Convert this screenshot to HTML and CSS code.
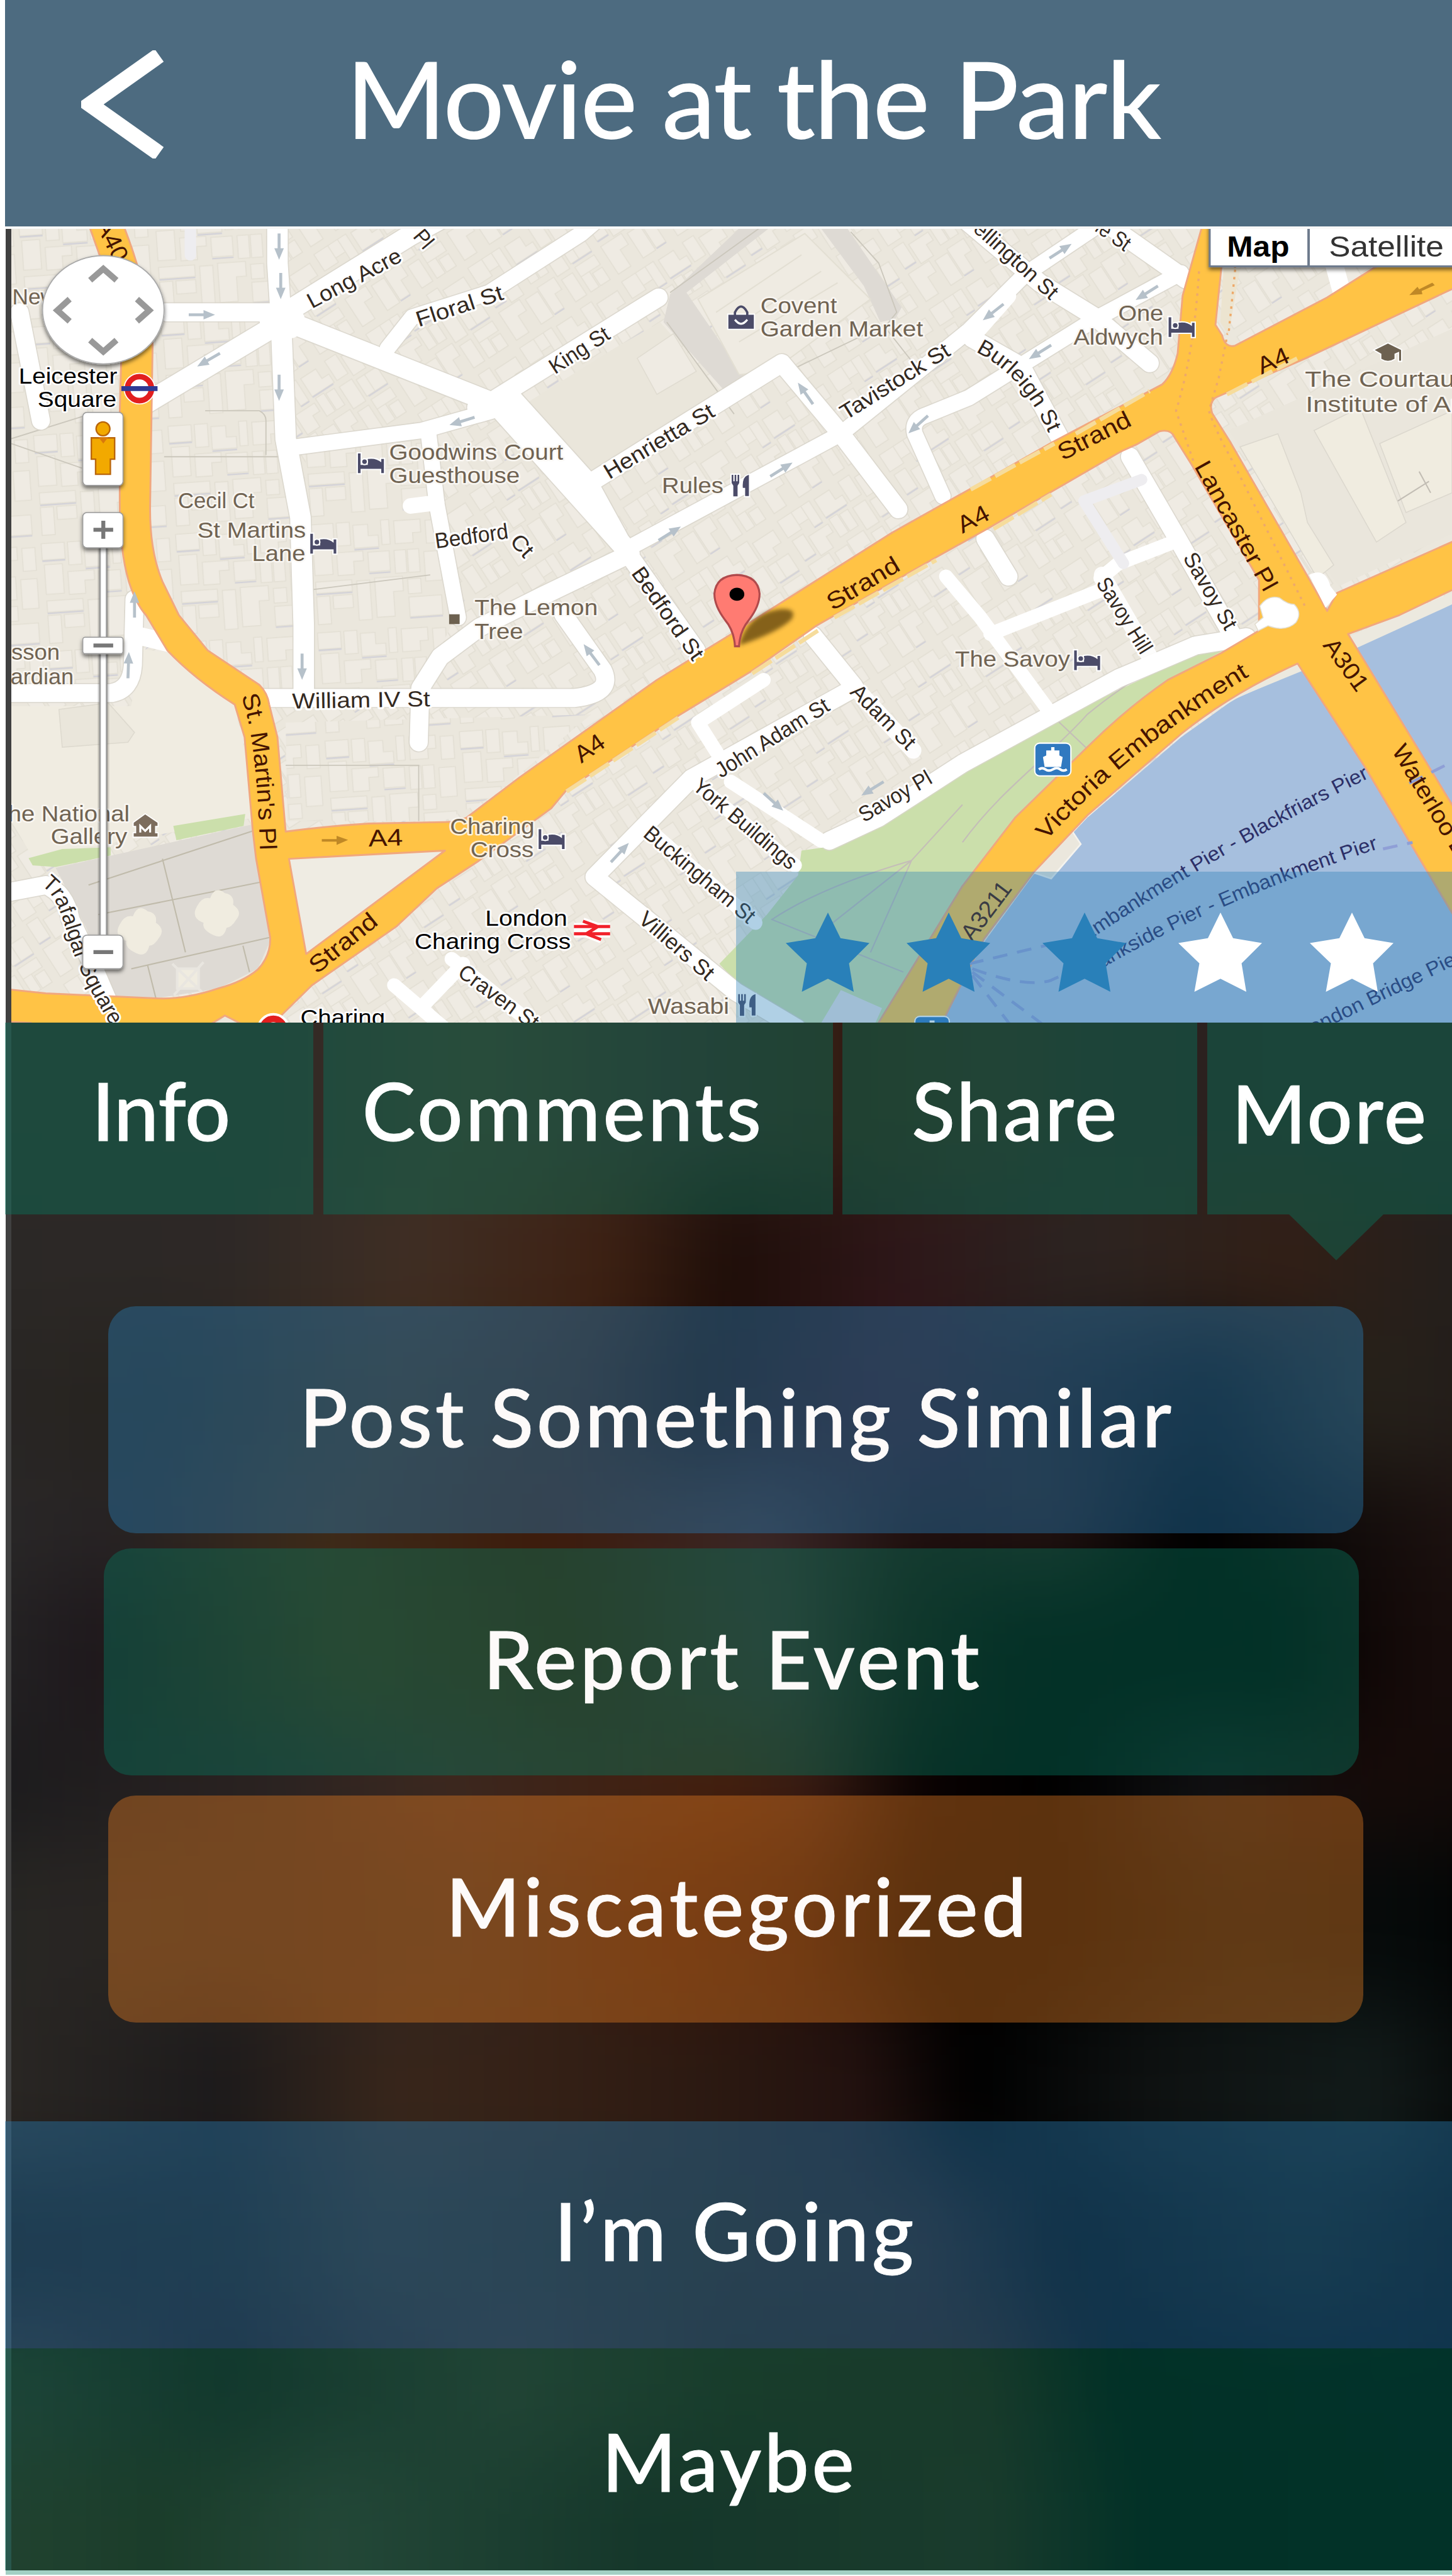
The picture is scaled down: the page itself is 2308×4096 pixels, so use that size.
FILE: index.html
```html
<!DOCTYPE html>
<html lang="en">
<head>
<meta charset="utf-8">
<title>Movie at the Park</title>
<link rel="stylesheet" href="styles.css">
</head>
<body>
<header class="header">
  <svg class="back" viewBox="0 0 131 172" aria-label="Back"><path d="M124 8 L14 86 L124 164" fill="none" stroke="#fff" stroke-width="25"/></svg>
  <h1 class="title">Movie at the Park</h1>
</header>

<section class="map-area">
<svg class="map" viewBox="7 139.2 877 483.6" preserveAspectRatio="none">
  <defs>
    <pattern id="blocks" width="74" height="58" patternUnits="userSpaceOnUse" patternTransform="rotate(-33)">
      <rect width="74" height="58" fill="#ebe7dd"/>
      <g fill="#efebe3" stroke="#e3dfd4" stroke-width=".6">
        <path d="M2 2h10v12h-10z M12 2h7v9h-7z M19 2h6v15h-6z M28 3h11v7h5v6h-16z M46 2h8v14h-8z M56 5h15v9h-6v5h-9z M3 17h8v14h-8z M13 20h14v6h-5v8h-9z M29 18h6v13h-6z M36 19h6v12h-6z M45 20h9v16h-9z M56 22h6v12h-6z M62 22h9v12h-9z M3 35h15v8h-6v12h-9z M21 37h9v18h-9z M31 35h12v9h-5v10h-7z M46 39h8v16h-8z M57 37h14v7h-14z M57 44h6v11h-6z M64 46h7v9h-7z"/>
      </g>
      <path d="M28 16.500h15 M3 31.500h8 M57 34.500h14 M31 54.500h7 M19 17.500h6" stroke="#d3d2d8" stroke-width=".9"/>
    </pattern>
    <pattern id="blocksFlat" width="82" height="66" patternUnits="userSpaceOnUse" patternTransform="rotate(-4)">
      <rect width="82" height="66" fill="#ebe7dd"/>
      <g fill="#efebe3" stroke="#e3dfd4" stroke-width=".6">
        <path d="M2 2h14v10h-14z M18 2h8v14h-8z M28 4h9v7h6v7h-15z M45 2h5v15h-5z M53 3h16v8h-5v6h-11z M72 4h8v14h-8z M3 15h11v18h-11z M17 20h16v6h-6v8h-10z M36 21h13v12h-13z M52 21h7v14h-7z M60 21h7v14h-7z M70 23h10v18h-10z M3 37h22v7h-22z M3 46h8v17h-8z M13 46h12v8h-12z M28 38h8v24h-8z M39 37h17v9h-6v15h-11z M59 39h8v9h-8z M59 50h20v12h-20z"/>
      </g>
      <path d="M28 19h15 M36 34h13 M2 12.700h14 M3 44.700h22 M59 62.700h20" stroke="#d3d2d8" stroke-width=".9"/>
    </pattern>
    <g id="bed" fill="#4b4b68" stroke="#fff" stroke-width="1.6" paint-order="stroke"><path d="M0 0h1.6v7h12.600v-3.600h1.600v8.600h-1.600v-2.600h-12.600v2.600h-1.600z M6 3.400q5-.8 8.200 2v2.600h-8.200z"/><circle cx="4" cy="5" r="1.4"/></g>
    <g id="fork" fill="#4b4b68" stroke="#fff" stroke-width="1.4" paint-order="stroke"><path d="M0 0h1v4h.8v-4h1v4h.8v-4h1v5l-1 1.600v6.600h-2.600v-6.600l-1-1.600z M10.500 0v13h-2.300v-5h-1.400q-.6-7 3.700-8z"/></g>
    <g id="ow" fill="#b6c1ca"><path d="M0-.9h9v-2l7 2.900-7 2.900v-2h-9z"/></g>
    <filter id="shade" x="-30%" y="-30%" width="160%" height="170%"><feDropShadow dx="0" dy="1.500" stdDeviation="1.300" flood-color="#000" flood-opacity=".55"/></filter>
    <filter id="soft"><feGaussianBlur stdDeviation="1.300"/></filter>
    <path id="pMartin" d="M147 424 C153 440 157 470 158.500 521"/>
    <path id="pTraf" d="M25 539 C35 545 38 560 42 571 C45 583 50 596 71 630"/>
    <path id="pBur" d="M594 214 C614 224 628 240 640 267"/>
    <path id="pVic" d="M637 512 C665 481 700 448 770 406"/>
    <path id="pPier1" d="M661 574 Q745 517 837 472"/>
    <path id="pPier2" d="M664 594 Q738 549 842 516"/>
  </defs>

  <!-- city blocks -->
  <rect x="0" y="130" width="890" height="500" fill="url(#blocks)"/>
  <path d="M0 130H165L180 320 186 425 160 430 100 380 70 420 0 420z M186 275L262 265 280 370 256 420 190 420z M174 440L360 435 300 485 270 500H175z" fill="url(#blocksFlat)"/>
  <path d="M7 430H80L86 395 104 398 143 430 152 470 154 498 20 522 7 500z" fill="#f0ece1"/>
  <path d="M36 432 66 428 82 446 78 452 38 455z" fill="#eae6db" stroke="#dedacf" stroke-width=".6"/>
  <path d="M748 262 884 200V325L815 357z" fill="#eae6dc"/>
  <path d="M755 272 778 264 792 300 796 318 812 344 802 352z M800 262 828 248 856 318 838 330z" fill="#f0ece0" stroke="#dcd8ce" stroke-width=".6"/>
  <path d="M840 270L884 250V300L856 312z" fill="#f0ece0" stroke="#dcd8ce" stroke-width=".6"/>
  <path d="M851 305 870 293 M864 287 871 300" fill="none" stroke="#c2bdb4" stroke-width=".8"/>
  <path d="M313 250 374 212 402 196 445 245 410 262 366 290z" fill="#eae6db"/>
  <path d="M388 218 410 203 424 226 400 240z M316 256 326 249 338 268 330 274z" fill="#efebe3" stroke="#e0dcd1" stroke-width=".6"/>
  <path d="M408 179 450 139 468 139 418 178 455 232 444 241 404 196z M500 139 516 139 549 187 545 194 536 196 526 174z" fill="#dedad4"/>
  <path d="M425 182 490 142 530 182 470 226 450 228z M436 190 488 155 M446 200 500 165 M450 208 510 172" fill="#efebe2" stroke="#e3dfd3" stroke-width=".8"/>
  <path d="M408 178 462 139 M406 196 447 252 M538 200 546 190 535 160 518 141 M484 224 538 198 560 226 M100 278H175 M7 270 50 285 M7 267 55 252 M174 466H255V500 M190 359 262 350 M125 250H158Q162 252 162 256V277" fill="none" stroke="#cbc7bc" stroke-width=".7"/>

  <!-- square, gardens and river -->
  <path d="M34 528.500 154 502 165 572 157 590 133 602 95 608 70 607 53 566z" fill="#dedad4"/>
  <path d="M54 539 154 506 M99 523 113 580 M60 557 160 537 M80 590 164 571 M90 588 95 608 M148 576 152 592" fill="none" stroke="#c0bbab" stroke-width=".8"/>
  <g fill="#f0ece0"><path id="ftn" d="M120 552q3-6 8-5q3-8 9-3q6 1 5 7q6 4 2 9q-3 5-6 5q-2 8-9 4q-6-3-5-7q-8-3-4-10z"/><use href="#ftn" transform="translate(-47 11)"/><path d="M108 590h13v12h-13z M105 587l20 19 M124 586l-18 20" stroke="#e9e6e0" stroke-width="1.600"/></g>
  <path d="M105.600 503 149.400 495.700 148.400 503 107.500 511.700z M17.500 522.600 38 517 67.500 516V521L34 528 20 527z" fill="#cbdfab"/>
  <path d="M745 396 725 396 709 407 643 438 586 470 511 514.700 488 518 486 533 467 557 438 587 450 600 482 623H536L586 540 662 455 711 414z" fill="#cbdfab"/>
  <path d="M586 513C610 480 640 460 662 435 690 412 710 402 728 399 M643 438 662 456 M586 490 555 524 Q500 540 470 560 L550 592 M555 524 530 580 M555 524 507 562" fill="none" stroke="#c4bdb8" stroke-width=".8"/>
  <path d="M884 364 825 394 792 408 751 426 719 449 662 498 629 533 599 574 573 623H890V364z" fill="#a6bfde"/>
  <path d="M884 361 820 388 825 395 884 368z M790 403 752 423 728 440 755 424 794 408z" fill="#ece9df"/>
  <path d="M652 505 658 514 640 535 628 531z" fill="#ebe7dd" stroke="#f5f3ee"/>
  <path d="M512 603 537 614 533 623 500 623z" fill="#e6e3e6"/>

  <!-- white streets -->
  <g fill="none" stroke-linecap="round" stroke-linejoin="round">
    <g stroke="#d8d4ca" stroke-opacity=".8">
      <path stroke-width="13.800" d="M169 130V160L171 191 174 267 183 315 185 381V421 M88 246 168 198 M171 194 302 246 381 334 M171 192 250 143 285 124"/>
      <path stroke-width="12.300" d="M101 190H165 M298 245 401 181 M290 248 312 242 358 293 381 335 424 396 M356 296 476 221 512 264 547 310 M384 337 330 363 292 382 268 400 256 419 255 452 M160 425H350Q374 422 367 408L343 374 M7 422H68Q80 420 81 405L82 365 M12 190 25 256 M7 543 28 539Q40 544 43 560L57 589 72 624 M588 134 633 172 667 193 700 221 M592 206 622 223 646 268 M668 132 722 170 M688 278 717 328 751 388 M759 388 728 393 681 413 586 465 535 498 505 512 M495 387 520 418 M520 419 421 474 362 534 448 604 485 626 M600 328 614 351"/>
      <path stroke-width="10.800" d="M181 272 257 262 300 250 M261 264 266 307 279 376 M236 212 251 193 298 178 354 142 375 124 M384 333 512 264 590 201 624 167 670 136 M574 302 557 264Q555 256 563 253L590 242 667 194 719 166"/>
    </g>
    <g stroke="#fff">
      <path stroke-width="12.500" d="M169 130V160L171 191 174 267 183 315 185 381V421 M88 246 168 198 M171 194 302 246 381 334 M171 192 250 143 285 124"/>
      <path stroke-width="20" d="M168 194 176 196"/>
      <path stroke-width="11" d="M101 190H165 M298 245 401 181 M290 248 312 242 358 293 381 335 424 396 M356 296 476 221 512 264 547 310 M384 337 330 363 292 382 268 400 256 419 255 452 M160 425H350Q374 422 367 408L343 374 M7 422H68Q80 420 81 405L82 365 M84 387 105 392 M12 190 25 256 M7 543 28 539Q40 544 43 560L57 589 72 624"/>
      <path stroke-width="9.500" d="M181 272 257 262 300 250 M261 264 266 307 279 376 M250 308 266 306 M236 212 251 193 298 178 354 142 375 124 M384 333 512 264 590 201 624 167 670 136 M574 302 557 264Q555 256 563 253L590 242 667 194 719 166 M614 180 592 205"/>
      <path stroke-width="11" d="M588 134 633 172 667 193 700 221 M592 206 622 223 646 268 M668 132 722 170 M688 278 717 328 751 388 M759 388 728 393 681 413 586 465 535 498 505 512 M495 387 520 418 M520 419 421 474 362 534 448 604 485 626 M600 328 614 351 M812 160 817 178"/>
      <path stroke-width="8.500" d="M717 329 681 343 670 352 M576 351 597 376 638 432 M603 386 671 359 M465 414 425 440 442 467 M240 600 275 630 M282 587 258 612 M275 584 332 630 M425 478 484 527 M445 476 500 512 M396 506 460 562"/>
      <path stroke-width="10" d="M520 418 556 457 M671 350 700 400" opacity=".9"/>
      <path stroke-width="7" stroke="#eeedf0" d="M116 139V155 M660 305 684 343 M660 305 695 292"/>
    </g>
  </g>

  <!-- main roads -->
  <g fill="#ffc345" stroke="#f1a77e" stroke-width="1.100" stroke-linejoin="round">
    <path d="M52 130 55 139C64 165 75 190 74 215L73 252V307Q73 335 78.500 354 83 368 89 374.500L102 396Q118 413 143 429L149 449 154 506 156 523 164.600 571Q165 582 157 590.500 148 598 133 602 112 609 95 608L28 605 0 602V622L19 623 22 630H118L137 618.500 148 624H166L172 617.700 190 600 241.700 564 266 541 291 524.600 335.500 492.400 345 481 413.500 435.500 457 409 497 381 571 338.700 601 322 683 274.500 692 270.500 706 262.500Q713 261 715 266L725.600 283 766.500 353V384L743.600 397.600 711 414Q685 432 662 455L618 498 585.700 540 535 622.700 530 630H570L599 572 629.500 531 662 496.500Q690 472 719 447 750 422 790 404L831 467 884 556 895 575V508L884 490 820.700 386 852 374.500 895 354V325L814 361 808 372 795 349 749 269 738 251.500Q736 245 740 242L795 218 890 173V140L837 162.700 808 181 752 210.300Q746 212 744 204L740 197.600 743.600 162.700 750 130H734L720 180 717 215Q714 228 707.500 234L641 269 590 298 543 324.400 448 384.400 400 414 316.400 473.400 284 498Q278 500.600 271 500.600L224.500 501.500Q200 503 174 506.400L169 449 164 429Q163 422 158 417 140 405 126.500 396L109 374.500 99 354Q91 335 91.500 307L93 210Q90 175 76 139L74 130z"/>
    <path d="M176 523 271 518 186.500 581z" fill="#efece3"/>
  </g>
  <path d="M730 165Q727 215 716 250L727 282 M752 162 748 200 742 230 736 250Q740 262 750 280L795 370" fill="none" stroke="#eea96a" stroke-width="1.300" stroke-dasharray="1.500 3"/>
  <path d="M745 163H755L748 204 743 196z" fill="#ece4d0"/><path d="M752 164 748 203" stroke="#eea96a" stroke-width="1.300" stroke-dasharray="1.500 3"/>
  <g fill="#fff"><path d="M797 350Q807 345 810 357L814 362 807 370z"/><path d="M767 369Q772 362 779 364 784 368 788 368 793 373 789 379 783 385 772 381L766 384 764 380 769 376z" stroke="#e2ddd0" stroke-width=".6"/></g>
  <path d="M591 298 642 270 M655 264 700 238 M345 482 413 437 M458 410 498 384 M508 376 570 341 M605 322 640 301 M747 240 790 218" stroke="#f6dc9c" stroke-width="2.500" stroke-dasharray="14 3" fill="none"/>

  <!-- ferry routes -->
  <path d="M842 517 860 513 M858 477 884 464 M590 587 640 575 M592 590Q625 602 640 597 655 590 664 585 M592 592 635 624 M592 594 615 624" fill="none" stroke="#8f9fd6" stroke-width="1.800" stroke-dasharray="9 6"/>

  <!-- one-way arrows -->
  <use href="#ow" transform="translate(170 142) rotate(90)"/><use href="#ow" transform="translate(171 166) rotate(90)"/><use href="#ow" transform="translate(170 228) rotate(90)"/><use href="#ow" transform="translate(184 398) rotate(90)"/>
  <use href="#ow" transform="translate(115 191.500)"/><use href="#ow" transform="translate(134 215) rotate(150)"/><use href="#ow" transform="translate(289 254) rotate(163)"/>
  <use href="#ow" transform="translate(82 376) rotate(-90)"/><use href="#ow" transform="translate(78 413) rotate(-88)"/>
  <use href="#ow" transform="translate(401 329) rotate(-32)"/><use href="#ow" transform="translate(469 290) rotate(-32)"/><use href="#ow" transform="translate(495 246) rotate(-125)"/><use href="#ow" transform="translate(565 253) rotate(138)"/>
  <use href="#ow" transform="translate(639 157) rotate(-33)"/><use href="#ow" transform="translate(705 174) rotate(148)"/><use href="#ow" transform="translate(611 185) rotate(142)"/><use href="#ow" transform="translate(640 210) rotate(148)"/>
  <use href="#ow" transform="translate(365 405) rotate(-127)"/><use href="#ow" transform="translate(372 525) rotate(-47)"/><use href="#ow" transform="translate(465 483) rotate(42)"/><use href="#ow" transform="translate(538 476) rotate(148)"/>
  <g opacity=".45"><path fill="#704000" d="M196 511h9v-2l7 2.500-7 3v-2h-9z M872 172l-8 4-1-1.500-5 5 8-.5-.5-2 8-3.500z"/></g>

  <!-- labels on main roads -->
  <g class="lbl road">
    <text transform="translate(58 136) rotate(64)" textLength="27" lengthAdjust="spacingAndGlyphs">A40</text>
    <text><textPath href="#pMartin" textLength="95" lengthAdjust="spacingAndGlyphs">St. Martin's Pl</textPath></text>
    <text transform="translate(224.500 515.500) rotate(-2)" textLength="21" lengthAdjust="spacingAndGlyphs">A4</text>
    <text transform="translate(193 593.500) rotate(-39)" textLength="49" lengthAdjust="spacingAndGlyphs">Strand</text>
    <text transform="translate(354 465) rotate(-35)" textLength="19" lengthAdjust="spacingAndGlyphs">A4</text>
    <text transform="translate(507 372) rotate(-31)" textLength="49" lengthAdjust="spacingAndGlyphs">Strand</text>
    <text transform="translate(586 325) rotate(-28)" textLength="20" lengthAdjust="spacingAndGlyphs">A4</text>
    <text transform="translate(647 280.500) rotate(-27)" textLength="48" lengthAdjust="spacingAndGlyphs">Strand</text>
    <text transform="translate(768 228) rotate(-24)" textLength="20" lengthAdjust="spacingAndGlyphs">A4</text>
    <text transform="translate(727 284) rotate(61)" textLength="88" lengthAdjust="spacingAndGlyphs">Lancaster Pl</text>
    <text><textPath href="#pVic" textLength="160" lengthAdjust="spacingAndGlyphs">Victoria Embankment</textPath></text>
    <text transform="translate(805 393) rotate(54)" textLength="36" lengthAdjust="spacingAndGlyphs">A301</text>
    <text transform="translate(847 457) rotate(59)" textLength="112" lengthAdjust="spacingAndGlyphs">Waterloo Bridge</text>
    <text transform="translate(592 574) rotate(-53)" textLength="41" lengthAdjust="spacingAndGlyphs">A3211</text>
  </g>

  <!-- street labels -->
  <g class="lbl street">
    <text transform="translate(190 188) rotate(-28)" textLength="63" lengthAdjust="spacingAndGlyphs">Long Acre</text>
    <text transform="translate(251 144) rotate(50)" textLength="11" lengthAdjust="spacingAndGlyphs">Pl</text>
    <text transform="translate(255 199) rotate(-18)" textLength="55" lengthAdjust="spacingAndGlyphs">Floral St</text>
    <text transform="translate(338 228) rotate(-33)" textLength="41" lengthAdjust="spacingAndGlyphs">King St</text>
    <text transform="translate(371 292) rotate(-31)" textLength="76" lengthAdjust="spacingAndGlyphs">Henrietta St</text>
    <text transform="translate(515 256) rotate(-32)" textLength="76" lengthAdjust="spacingAndGlyphs">Tavistock St</text>
    <text transform="translate(265.500 334) rotate(-8)" textLength="45" lengthAdjust="spacingAndGlyphs">Bedford</text>
    <text transform="translate(310 330) rotate(48)" textLength="14" lengthAdjust="spacingAndGlyphs">Ct</text>
    <text transform="translate(178 431.500) rotate(-1)" textLength="84" lengthAdjust="spacingAndGlyphs">William IV St</text>
    <text transform="translate(384 349) rotate(55)" textLength="66" lengthAdjust="spacingAndGlyphs">Bedford St</text>
    <text transform="translate(439 474) rotate(-32)" textLength="79" lengthAdjust="spacingAndGlyphs">John Adam St</text>
    <text transform="translate(517 422) rotate(45)" textLength="50" lengthAdjust="spacingAndGlyphs">Adam St</text>
    <text transform="translate(526 501) rotate(-30)" textLength="49" lengthAdjust="spacingAndGlyphs">Savoy Pl</text>
    <text transform="translate(421 480) rotate(40)" textLength="78" lengthAdjust="spacingAndGlyphs">York Buildings</text>
    <text transform="translate(391 509) rotate(40)" textLength="84" lengthAdjust="spacingAndGlyphs">Buckingham St</text>
    <text transform="translate(388 561) rotate(41)" textLength="56" lengthAdjust="spacingAndGlyphs">Villiers St</text>
    <text transform="translate(278 594) rotate(36)" textLength="57" lengthAdjust="spacingAndGlyphs">Craven St</text>
    <text transform="translate(583 132) rotate(42)" textLength="76" lengthAdjust="spacingAndGlyphs">Wellington St</text>
    <text transform="translate(633 117) rotate(35)" textLength="63" lengthAdjust="spacingAndGlyphs">Catherine St</text>
    <text><textPath href="#pBur" textLength="68" lengthAdjust="spacingAndGlyphs">Burleigh St</textPath></text>
    <text transform="translate(720 339.500) rotate(60)" textLength="52" lengthAdjust="spacingAndGlyphs">Savoy St</text>
    <text transform="translate(667 355) rotate(58)" textLength="52" lengthAdjust="spacingAndGlyphs">Savoy Hill</text>
    <text><textPath href="#pTraf" textLength="97" lengthAdjust="spacingAndGlyphs">Trafalgar Square</textPath></text>
  </g>
  <g class="lbl pier">
    <text><textPath href="#pPier1" textLength="200" lengthAdjust="spacingAndGlyphs">Embankment Pier - Blackfriars Pier</textPath></text>
    <text><textPath href="#pPier2" textLength="192" lengthAdjust="spacingAndGlyphs">Bankside Pier - Embankment Pier</textPath></text>
    <text transform="translate(793 633) rotate(-26)" textLength="109" lengthAdjust="spacingAndGlyphs">London Bridge Pier</text>
  </g>

  <!-- places -->
  <g class="lbl poi">
    <text x="7.600" y="185" textLength="27" lengthAdjust="spacingAndGlyphs">New</text>
    <text x="463" y="190.500" textLength="46.600" lengthAdjust="spacingAndGlyphs">Covent</text>
    <text x="463" y="204.700" textLength="99" lengthAdjust="spacingAndGlyphs">Garden Market</text>
    <text x="403" y="300" textLength="37.500" lengthAdjust="spacingAndGlyphs">Rules</text>
    <text x="237" y="279.700" textLength="106" lengthAdjust="spacingAndGlyphs">Goodwins Court</text>
    <text x="237" y="294" textLength="79.500" lengthAdjust="spacingAndGlyphs">Guesthouse</text>
    <text x="108.500" y="309.500" textLength="46.500" lengthAdjust="spacingAndGlyphs">Cecil Ct</text>
    <text x="120.300" y="327.500" textLength="66" lengthAdjust="spacingAndGlyphs">St Martins</text>
    <text x="153.500" y="341.500" textLength="32.500" lengthAdjust="spacingAndGlyphs">Lane</text>
    <text x="289" y="374.500" textLength="75" lengthAdjust="spacingAndGlyphs">The Lemon</text>
    <text x="289" y="389" textLength="29.500" lengthAdjust="spacingAndGlyphs">Tree</text>
    <text x="274" y="507.700" textLength="51.500" lengthAdjust="spacingAndGlyphs">Charing</text>
    <text x="286.500" y="522" textLength="38.500" lengthAdjust="spacingAndGlyphs">Cross</text>
    <text x="394.500" y="617.500" textLength="49.500" lengthAdjust="spacingAndGlyphs">Wasabi</text>
    <text x="680.800" y="195" textLength="27.500" lengthAdjust="spacingAndGlyphs">One</text>
    <text x="653.600" y="209.800" textLength="54.500" lengthAdjust="spacingAndGlyphs">Aldwych</text>
    <text x="794.500" y="235.300" textLength="104" lengthAdjust="spacingAndGlyphs">The Courtauld</text>
    <text x="795" y="250.700" textLength="98" lengthAdjust="spacingAndGlyphs">Institute of Art</text>
    <text x="581.500" y="406" textLength="70" lengthAdjust="spacingAndGlyphs">The Savoy</text>
    <text x="7" y="401.700" textLength="29.500" lengthAdjust="spacingAndGlyphs">sson</text>
    <text x="6.500" y="416.500" textLength="38.500" lengthAdjust="spacingAndGlyphs">ardian</text>
    <text x="5" y="500" textLength="74" lengthAdjust="spacingAndGlyphs">he National</text>
    <text x="31" y="514" textLength="46.500" lengthAdjust="spacingAndGlyphs">Gallery</text>
  </g>
  <g class="lbl station">
    <text x="11.500" y="233.600" textLength="60" lengthAdjust="spacingAndGlyphs">Leicester</text>
    <text x="23" y="247.800" textLength="48" lengthAdjust="spacingAndGlyphs">Square</text>
    <text x="295.500" y="563.800" textLength="50" lengthAdjust="spacingAndGlyphs">London</text>
    <text x="252.500" y="578" textLength="95" lengthAdjust="spacingAndGlyphs">Charing Cross</text>
    <text x="183" y="624.500" textLength="51.500" lengthAdjust="spacingAndGlyphs">Charing</text>
  </g>

  <!-- place icons -->
  <use href="#bed" x="218" y="276"/><use href="#bed" x="189" y="325"/><use href="#bed" x="328" y="505"/><use href="#bed" x="711.500" y="193"/><use href="#bed" x="654" y="396"/>
  <use href="#fork" x="445.500" y="289"/><use href="#fork" x="449.500" y="605.500"/>
  <path fill="#4b4b68" stroke="#fff" stroke-width="1.500" paint-order="stroke" d="M443.500 191.500h15.500v8.500h-15.500z"/>
  <path d="M447.500 192v-2q3.700-7 7.500 0v2" fill="none" stroke="#4b4b68" stroke-width="1.400"/><path d="M447.500 194.500q3.700 5 7.500 0" fill="none" stroke="#fff" stroke-width="1.300"/>
  <path fill="#6d6150" stroke="#fff" stroke-width="1.400" paint-order="stroke" d="M837 213l8-4 8 4v6.500h-1.200v-5.500l-2.800 1.300v3q-4 2.500-8 0v-3z"/>
  <path fill="#7c6d5d" stroke="#fff" stroke-width="1.400" paint-order="stroke" d="M81.500 501l7-5 7.500 5v2h-1.500v4.500h1.500v2h-14.500v-2h1.500v-4.500h-1.500z"/><path d="M85.500 507v-4l3 3 3-3v4" fill="none" stroke="#fff" stroke-width="1.200"/>
  <rect x="273.500" y="374" width="6.400" height="6" fill="#6d6150"/>
  <circle cx="85" cy="236.500" r="7.400" fill="#fff" stroke="#fff" stroke-width="4.500"/><circle cx="85" cy="236.500" r="7.300" fill="#fff" stroke="#e21f1f" stroke-width="3.400"/><path d="M74 235h22v3h-22z" fill="#2f3a94"/>
  <circle cx="166.500" cy="627" r="7.500" fill="#fff" stroke="#fff" stroke-width="5"/><circle cx="166.500" cy="627" r="6.500" fill="#fff" stroke="#e21f1f" stroke-width="4"/>
  <g fill="none" stroke="#fff" stroke-width="4.500"><path d="M349.500 564.300h22 M349.500 568.700h22 M355 561l9 3.300-7 4.400 9 3.500"/><path d="M349.500 564.300h22 M349.500 568.700h22 M355 561l9 3.300-7 4.400 9 3.500" stroke="#f1212b" stroke-width="1.900"/></g>
  <rect x="630" y="452.500" width="22" height="20" rx="3" fill="#3079c0" stroke="#fff" stroke-width=".8"/><path fill="#fff" d="M640 455h2v2h3v3l2 1-1 6h-10l-1-6 2-1v-3h3z"/><path d="M632.500 468.500q2-1.500 4 0t4.500 0 4.500 0 4 0" fill="none" stroke="#fff" stroke-width="1.500"/>
  <rect x="557" y="619" width="21" height="12" rx="3" fill="#3079c0" stroke="#fff" stroke-width=".8"/><path d="M566 623h3v-1.500h-3z" fill="#fff"/>

  <!-- pin -->
  <path d="M450 393Q455 374 474 371 486 370 482 377 474 385 450 393z" fill="#3a2800" opacity=".62" filter="url(#soft)"/>
  <path d="M447.500 393.500Q447 384 441.500 377.500 435 369 435 361.500 436 350.500 448.700 350 461.500 350.500 462.500 361.500 462.500 369 456 377.500 450.500 384 450 393.500z" fill="#ff7b72" stroke="#b04a4c" stroke-width="1.200"/>
  <ellipse cx="448.700" cy="361.800" rx="4.500" ry="4" fill="#000"/>

  <!-- pan and zoom controls -->
  <ellipse cx="63" cy="188.500" rx="37" ry="33" fill="#fff" stroke="#aaa" stroke-width=".7" filter="url(#shade)"/>
  <path d="M55 170.500 63 163.500 71 170.500 M55 207 63 214 71 207 M42.500 182 35 188.800 42.500 195.500 M83.500 182 91 188.800 83.500 195.500" fill="none" stroke="#999" stroke-width="3.700"/>
  <path d="M60.800 332h4.400v240h-4.400z" fill="#fff" filter="url(#shade)"/>
  <path d="M61 332v240 M65 332v240" stroke="#777" stroke-width="1" stroke-opacity=".7"/>
  <g filter="url(#shade)" fill="#fff" stroke="#999" stroke-width=".6"><rect x="50.500" y="251" width="24.500" height="44.500" rx="2.500"/><rect x="50.500" y="312" width="24.500" height="21.500" rx="2.500"/><rect x="50.500" y="388" width="24.500" height="10" rx="1.500"/><rect x="50.500" y="569.500" width="24.500" height="20.500" rx="2.500"/></g>
  <path d="M57 322.500h12 M63 317v11 M57 393h12 M57 579.800h12" stroke="#777" stroke-width="2.400"/>
  <path d="M55.700 266.500h14.200v13h-2.600v9.200h-9v-9.200h-2.600z" fill="#f2a900" stroke="#b9650a" stroke-width=".9"/><circle cx="62.800" cy="261" r="4.200" fill="#f2a900" stroke="#b9650a" stroke-width=".9"/><path d="M60 266h6l-3 4z" fill="#d9790c"/>

  <!-- map type switch -->
  <rect x="736.500" y="130" width="155" height="32" fill="#fff" stroke="#6d7a8c" stroke-width="1.200" filter="url(#shade)"/>
  <path d="M796.700 139v23" stroke="#6d7a8c" stroke-width="1.500"/>
  <text class="type on" x="747" y="156" textLength="38" lengthAdjust="spacingAndGlyphs">Map</text>
  <text class="type" x="809" y="156" textLength="70" lengthAdjust="spacingAndGlyphs">Satellite</text>
</svg>
  <div class="rating">
    <svg class="star on" viewBox="0 0 266 293" preserveAspectRatio="none"><path d="M134 0 174 95 266 113 201 188 216 293 134 245 51 293 67 188 0 113 94 95z"/></svg>
    <svg class="star on" viewBox="0 0 266 293" preserveAspectRatio="none"><path d="M134 0 174 95 266 113 201 188 216 293 134 245 51 293 67 188 0 113 94 95z"/></svg>
    <svg class="star on" viewBox="0 0 266 293" preserveAspectRatio="none"><path d="M134 0 174 95 266 113 201 188 216 293 134 245 51 293 67 188 0 113 94 95z"/></svg>
    <svg class="star" viewBox="0 0 266 293" preserveAspectRatio="none"><path d="M134 0 174 95 266 113 201 188 216 293 134 245 51 293 67 188 0 113 94 95z"/></svg>
    <svg class="star" viewBox="0 0 266 293" preserveAspectRatio="none"><path d="M134 0 174 95 266 113 201 188 216 293 134 245 51 293 67 188 0 113 94 95z"/></svg>
  </div>
</section>

<main class="panel">
  <svg class="backdrop" viewBox="7 622.800 877 942.500" preserveAspectRatio="none" aria-hidden="true">
    <defs>
      <filter id="melt" filterUnits="userSpaceOnUse" x="-60" y="540" width="1010" height="1110" color-interpolation-filters="sRGB"><feGaussianBlur stdDeviation="12 26"/></filter>
      <linearGradient id="r0"><stop offset=".05" stop-color="#2f2826"/><stop offset=".2" stop-color="#2f2826"/><stop offset=".34" stop-color="#412e22"/><stop offset=".47" stop-color="#372020"/><stop offset=".58" stop-color="#331c12"/><stop offset=".66" stop-color="#36201a"/><stop offset=".74" stop-color="#2c211f"/><stop offset=".9" stop-color="#2a2220"/></linearGradient>
      <linearGradient id="r1"><stop offset=".03" stop-color="#2b2826"/><stop offset=".18" stop-color="#2d2826"/><stop offset=".3" stop-color="#3f2e24"/><stop offset=".42" stop-color="#3d2113"/><stop offset=".5" stop-color="#1e0e09"/><stop offset=".6" stop-color="#2d1618"/><stop offset=".72" stop-color="#2c2421"/><stop offset=".85" stop-color="#321f16"/><stop offset=".97" stop-color="#221f1d"/></linearGradient>
      <linearGradient id="r2"><stop offset=".03" stop-color="#292624"/><stop offset=".14" stop-color="#26231e"/><stop offset=".28" stop-color="#3c2a18"/><stop offset=".4" stop-color="#3a1e10"/><stop offset=".48" stop-color="#210c06"/><stop offset=".6" stop-color="#321318"/><stop offset=".7" stop-color="#201414"/><stop offset=".8" stop-color="#0c0a0a"/><stop offset=".9" stop-color="#26211a"/><stop offset="1" stop-color="#221b19"/></linearGradient>
      <linearGradient id="r3"><stop offset=".03" stop-color="#2a2828"/><stop offset=".12" stop-color="#272324"/><stop offset=".24" stop-color="#3d2b1a"/><stop offset=".38" stop-color="#3d1b0c"/><stop offset=".52" stop-color="#3a2828"/><stop offset=".62" stop-color="#1f100f"/><stop offset=".7" stop-color="#241513"/><stop offset=".79" stop-color="#000"/><stop offset=".88" stop-color="#100b0a"/><stop offset=".98" stop-color="#201311"/></linearGradient>
      <linearGradient id="r4"><stop offset=".03" stop-color="#242324"/><stop offset=".1" stop-color="#1e181c"/><stop offset=".26" stop-color="#3f2a16"/><stop offset=".4" stop-color="#3d1e0c"/><stop offset=".53" stop-color="#3c2826"/><stop offset=".61" stop-color="#180b08"/><stop offset=".68" stop-color="#040000"/><stop offset=".84" stop-color="#000"/><stop offset=".92" stop-color="#140a09"/><stop offset="1" stop-color="#1a100f"/></linearGradient>
      <linearGradient id="r5"><stop offset=".05" stop-color="#1c1b1d"/><stop offset=".22" stop-color="#2a2322"/><stop offset=".32" stop-color="#3c2820"/><stop offset=".5" stop-color="#441f0d"/><stop offset=".55" stop-color="#381b12"/><stop offset=".62" stop-color="#0a0202"/><stop offset=".7" stop-color="#000"/><stop offset=".8" stop-color="#121214"/><stop offset=".9" stop-color="#170b09"/><stop offset="1" stop-color="#110b09"/></linearGradient>
      <linearGradient id="r6"><stop offset=".03" stop-color="#272624"/><stop offset=".2" stop-color="#2a2420"/><stop offset=".34" stop-color="#32251e"/><stop offset=".46" stop-color="#36170a"/><stop offset=".54" stop-color="#281008"/><stop offset=".62" stop-color="#020000"/><stop offset=".7" stop-color="#000"/><stop offset=".82" stop-color="#080e0d"/><stop offset=".93" stop-color="#050909"/><stop offset="1" stop-color="#000"/></linearGradient>
      <linearGradient id="r7"><stop offset=".04" stop-color="#2a2724"/><stop offset=".18" stop-color="#1c1a1b"/><stop offset=".29" stop-color="#38261b"/><stop offset=".4" stop-color="#331f15"/><stop offset=".5" stop-color="#2a1811"/><stop offset=".58" stop-color="#22110f"/><stop offset=".65" stop-color="#000"/><stop offset=".76" stop-color="#0e1111"/><stop offset=".9" stop-color="#121b1a"/><stop offset="1" stop-color="#030303"/></linearGradient>
      <linearGradient id="r8"><stop offset=".04" stop-color="#18100c"/><stop offset=".18" stop-color="#1a1410"/><stop offset=".28" stop-color="#2e231a"/><stop offset=".5" stop-color="#28180c"/><stop offset=".62" stop-color="#261410"/><stop offset=".71" stop-color="#020000"/><stop offset=".86" stop-color="#0c100e"/><stop offset="1" stop-color="#000"/></linearGradient>
      <linearGradient id="r9"><stop offset=".06" stop-color="#2c201c"/><stop offset=".18" stop-color="#1a0c0a"/><stop offset=".36" stop-color="#342018"/><stop offset=".5" stop-color="#251408"/><stop offset=".66" stop-color="#261006"/><stop offset=".74" stop-color="#000"/><stop offset="1" stop-color="#000408"/></linearGradient>
      <linearGradient id="r10"><stop offset=".06" stop-color="#321c0e"/><stop offset=".14" stop-color="#2a1406"/><stop offset=".25" stop-color="#38261c"/><stop offset=".45" stop-color="#200a06"/><stop offset=".66" stop-color="#28120a"/><stop offset=".76" stop-color="#000"/><stop offset="1" stop-color="#000404"/></linearGradient>
    </defs>
    <g filter="url(#melt)">
      <path fill="url(#r0)" d="M-40 520h970v200h-970z"/><path fill="url(#r1)" d="M-40 720h970v90h-970z"/><path fill="url(#r2)" d="M-40 810h970v85h-970z"/><path fill="url(#r3)" d="M-40 895h970v65h-970z"/><path fill="url(#r4)" d="M-40 960h970v90h-970z"/><path fill="url(#r5)" d="M-40 1050h970v70h-970z"/><path fill="url(#r6)" d="M-40 1120h970v100h-970z"/><path fill="url(#r7)" d="M-40 1220h970v100h-970z"/><path fill="url(#r8)" d="M-40 1320h970v90h-970z"/><path fill="url(#r9)" d="M-40 1410h970v80h-970z"/><path fill="url(#r10)" d="M-40 1490h970v200h-970z"/>
    </g>
  </svg>
  <nav class="tabs">
    <a class="tab info">Info</a>
    <a class="tab comments">Comments</a>
    <a class="tab share">Share</a>
    <a class="tab more">More</a>
  </nav>
  <div class="actions">
    <button class="action post">Post Something Similar</button>
    <button class="action report">Report Event</button>
    <button class="action miscat">Miscategorized</button>
  </div>
  <div class="reply going">I’m Going</div>
  <div class="reply maybe">Maybe</div>
  <div class="edge"></div>
</main>
</body>
</html>
```
FILE: styles.css
```css
* { box-sizing: border-box; }
body { margin: 0; width: 2308px; height: 4096px; overflow: hidden; background: #fff; font-family: Lato, "Open Sans", sans-serif; color: #fff; }

.header { display: flex; height: 364px; margin-left: 8px; background: #4d6b80; border-bottom: 4px solid #f8f8f8; }
.back { width: 131px; height: 172px; margin: 80px 0 0 121px; flex: none; }
.title { margin: 52px 0 0 290px; font-size: 171px; line-height: 206px; font-weight: 500; letter-spacing: -2.3px; white-space: nowrap; }

.map-area { position: relative; height: 1262px; margin-left: 9px; border-left: 9px solid #404040; }
.map { display: block; width: 2290px; height: 1262px; }
.lbl { font-family: "Liberation Sans", Arial, sans-serif; font-size: 13.3px; }
.lbl text { stroke-linejoin: round; paint-order: stroke; }
.road { fill: #451400; font-size: 14.5px; }
.street { fill: #33291f; stroke: #fff; stroke-width: 2.4px; font-size: 13.3px; }
.pier { fill: #2c2f68; font-size: 12.2px; }
.poi { fill: #706352; stroke: #fbf9f5; stroke-width: 2px; stroke-opacity: .85; }
.station { fill: #000; stroke: #fff; stroke-width: 2px; }
.type { font: 17.5px "Liberation Sans", Arial, sans-serif; fill: #333; }
.type.on { font-weight: 700; fill: #000; }

.rating { position: absolute; left: 1152px; right: 0; bottom: 0; height: 240px; padding: 65px 0 0 79px; display: flex; background: rgba(41, 128, 185, .37); }
.star { width: 133px; height: 126px; fill: #fff; margin-right: 76px; }
.star.on { fill: #2980b9; margin-right: 83px; }
.star.on:first-child { margin-right: 59px; }

.panel { position: relative; height: 2470px; padding-left: 8px; background: linear-gradient(to right, #fff 9px, #404040 9px, #404040 18px, #111 18px); }
.backdrop { position: absolute; left: 18px; top: 0; width: 2290px; height: 2470px; }
.tabs, .actions, .reply, .edge { position: relative; }
.tabs, .action, .reply { -webkit-text-stroke: 1px currentColor; }
.tabs { display: grid; grid-template-columns: 490px 810px 564px 389px; height: 305px; justify-content: space-between; }
.tab { position: relative; background: rgba(6, 123, 97, .4); font-size: 127px; font-weight: 500; line-height: 152px; padding-top: 63px; white-space: nowrap; letter-spacing: 3px; }
.info { padding-left: 138px; letter-spacing: 0; }
.comments { padding-left: 62px; letter-spacing: 4.3px; }
.share { padding-left: 110px; }
.more { padding: 67px 0 0 39px; }
.more::after { content: ""; position: absolute; left: 130px; top: 100%; border: solid transparent; border-width: 73px 75px 0; border-top-color: rgba(6, 123, 97, .4); }

.actions { display: flex; flex-direction: column; padding: 146px 0 157px 157px; }
.action { width: 1995px; height: 361px; margin: 0 0 0 7px; padding: 0 0 12px; border: 0; border-radius: 44px; color: #fdfaf9; font: 500 127px/152px Lato, "Open Sans", sans-serif; letter-spacing: 4.8px; white-space: nowrap; }
.post { padding-left: 4px; background: rgba(41, 128, 185, .4); }
.report { padding-left: 5px; margin: 24px 0 32px; background: rgba(6, 123, 97, .4); letter-spacing: 5.4px; }
.miscat { padding-left: 7px; background: rgba(230, 126, 34, .4); letter-spacing: 5.6px; }
.reply { display: flex; justify-content: center; align-items: center; font-size: 127px; font-weight: 500; line-height: 152px; letter-spacing: 4.5px; }
.going { height: 361px; padding: 0 0 16px 22px; background: rgba(41, 128, 185, .4); letter-spacing: 4.8px; }
.maybe { height: 353px; padding: 5px 0 0 3px; background: rgba(6, 123, 97, .4); }
.edge { height: 9px; margin-left: 1px; background: #a2d0c4; border-bottom: 2px solid #fff; }
```
